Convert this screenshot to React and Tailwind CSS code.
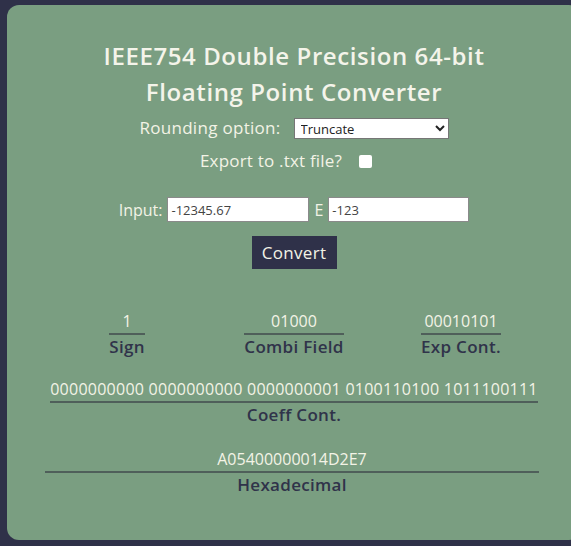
import React from 'react';

const Field = ({ value, label, className = '', valueClass = '' }) => (
  <div className={`inline-flex flex-col items-stretch text-center ${className}`}>
    <span className={`border-b-2 border-[#4f5f5a] text-[16px] leading-[24px] text-[#f3f3e6] ${valueClass}`}>{value}</span>
    <span className="text-[17px] leading-[24px] font-semibold tracking-[0.3px] text-[#30334a]">{label}</span>
  </div>
);

export default function App() {
  return (
    <div
      className="h-[546px] w-[571px] overflow-hidden bg-[#2f3149] pl-[7px] pt-[5px]"
      style={{ fontFamily: '"Open Sans", "Liberation Sans", sans-serif' }}
    >
      <div className="flex h-[535px] w-[574px] flex-col items-center rounded-[12px] bg-[#7a9e81] pt-[33px]">
        {/* Title */}
        <h1 className="text-center text-[24px] font-semibold leading-[36px] tracking-[0.6px] text-[#f4f4ea]">
          IEEE754 Double Precision 64-bit
          <br />
          Floating Point Converter
        </h1>

        {/* Options */}
        <div className="mt-[6px] flex h-[24px] items-center gap-[13px] text-[17px] tracking-[0.3px] text-[#f3f3e6]">
          <span>Rounding option:</span>
          <select className="h-[21px] w-[155px] border border-[#767676] bg-white pl-[2px] text-[13px] tracking-normal text-[#222]">
            <option>Truncate</option>
          </select>
        </div>
        <div className="mt-[9px] mr-[16px] flex h-[24px] items-center gap-[17px] text-[17px] tracking-[0.2px] text-[#f3f3e6]">
          <span>Export to .txt file?</span>
          <input type="checkbox" className="h-[13px] w-[13px] appearance-none rounded-[2px] bg-white" />
        </div>

        {/* Input */}
        <div className="mt-[24px] flex h-[25px] items-center text-[16px] text-[#f3f3e6]">
          <span className="mr-[5px]">Input:</span>
          <input
            readOnly
            value="-12345.67"
            className="h-[25px] w-[142px] border border-[#8a8a8a] bg-white px-[3px] text-[13px] text-[#444]"
          />
          <span className="mx-[5px]">E</span>
          <input
            readOnly
            value="-123"
            className="h-[25px] w-[141px] border border-[#8a8a8a] bg-white px-[3px] text-[13px] text-[#444]"
          />
        </div>
        <button className="mt-[14px] h-[33px] w-[85px] bg-[#2f3149] text-[17px] tracking-[0.3px] text-[#f3f3e6]">Convert</button>

        {/* Results */}
        <div className="mt-[40px] grid w-[501px] grid-cols-3">
          <div className="flex justify-center">
            <Field value="1" label="Sign" />
          </div>
          <div className="flex justify-center">
            <Field value="01000" label="Combi Field" />
          </div>
          <div className="flex justify-center">
            <Field value="00010101" label="Exp Cont." />
          </div>
        </div>

        <Field
          className="mt-[18px]"
          valueClass="tracking-[0.25px]"
          value="0000000000 0000000000 0000000001 0100110100 1011100111"
          label="Coeff Cont."
        />

        <Field className="mt-[20px] mr-[4px] w-[494px]" value="A05400000014D2E7" label="Hexadecimal" />
      </div>
    </div>
  );
}
